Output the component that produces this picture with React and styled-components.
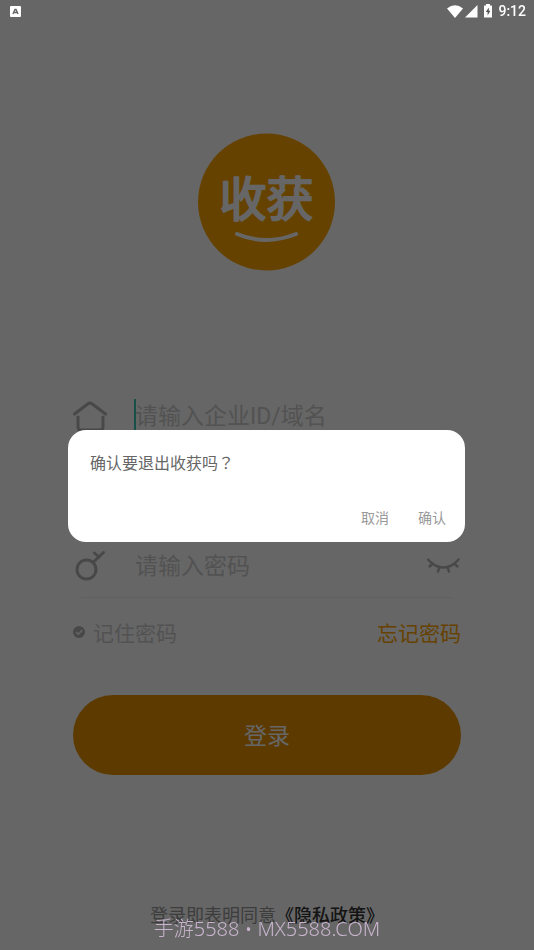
import React, { useState } from 'react'
import styled, { createGlobalStyle, ThemeProvider } from 'styled-components'

const theme = {
  background: '#ffffff',
  brand: '#ffa500',
  button: '#e69100',
  hint: '#cecece',
  icon: '#b4b4b4',
  line: '#f2f2f2',
  caret: '#3cc8b4'
}

const GlobalStyle = createGlobalStyle`
  * {
    box-sizing: border-box;
  }
  body {
    margin: 0;
    background: ${theme.background};
    font-family: Roboto, "Noto Sans CJK SC", sans-serif;
  }
  button, input {
    font-family: inherit;
    border: none;
    background: none;
    padding: 0;
    margin: 0;
  }
`

const Screen = styled.div`
  min-height: 100vh;
  display: flex;
  flex-direction: column;
  background: ${props => props.theme.background};
`

const StatusBar = styled.header`
  position: fixed;
  top: 0;
  left: 0;
  right: 0;
  z-index: 3;
  height: 22px;
  padding: 0 8px 0 10px;
  display: flex;
  align-items: center;
  justify-content: space-between;
  color: #fff;
`

const StatusIcons = styled.div`
  display: flex;
  align-items: center;
  gap: 5px;
  svg {
    display: block;
  }
`

const Signals = styled.div`
  display: flex;
  gap: 2px;
`

const Clock = styled.time`
  font: 500 14px/22px Roboto, sans-serif;
`

const Content = styled.main`
  flex: 1;
  display: flex;
  flex-direction: column;
  padding: 133px 73px 0;
`

const Logo = styled.svg`
  display: block;
  align-self: center;
  width: 138px;
  height: 138px;
  text {
    font-family: "Noto Sans CJK SC", sans-serif;
    font-size: 47px;
    font-weight: 400;
    fill: #fff;
    stroke: #fff;
    stroke-width: 2;
    stroke-linejoin: round;
  }
`

const Form = styled.form`
  display: flex;
  flex-direction: column;
  margin-top: 102px;
`

const Field = styled.div`
  position: relative;
  display: flex;
  align-items: center;
  height: 75px;
  padding-top: 8px;
  > svg {
    flex: none;
  }
  &::after {
    content: '';
    position: absolute;
    left: 8px;
    right: 8px;
    bottom: 0;
    height: 1px;
    background: ${props => props.theme.line};
  }
`

const Input = styled.input`
  flex: 1;
  min-width: 0;
  height: 32px;
  margin-left: 27px;
  padding: 4px 0 0 1px;
  background: linear-gradient(${props => props.theme.caret}, ${props => props.theme.caret}) no-repeat left / ${props => (props.$active ? '2px' : '0')} 100%;
  font-size: 23px;
  line-height: 28px;
  outline: none;
  &::placeholder {
    color: ${props => props.theme.hint};
    opacity: 1;
  }
`

const EyeButton = styled.button`
  display: flex;
  color: ${props => props.theme.icon};
`

const Options = styled.div`
  display: flex;
  justify-content: space-between;
  align-items: center;
  height: 30px;
  margin-top: 19px;
  font-size: 21px;
  line-height: 30px;
  font-family: "Noto Sans CJK SC", sans-serif;
`

const Remember = styled.label`
  display: flex;
  align-items: center;
  gap: 8px;
  color: ${props => props.theme.hint};
`

const Tick = styled.span`
  display: grid;
  width: 12px;
  height: 12px;
  > * {
    grid-area: 1 / 1;
  }
  svg {
    pointer-events: none;
  }
`

const Checkbox = styled.input`
  appearance: none;
  width: 12px;
  height: 12px;
  border-radius: 50%;
  background: ${props => props.theme.icon};
`

const Forgot = styled.a`
  color: ${props => props.theme.brand};
  text-decoration: none;
`

const LoginButton = styled.button`
  height: 80px;
  margin-top: 48px;
  padding-bottom: 2px;
  border-radius: 40px;
  background: ${props => props.theme.button};
  color: #fff;
  font-size: 23px;
  cursor: pointer;
`

const Agreement = styled.p`
  margin: auto 0 21px;
  text-align: center;
  white-space: nowrap;
  font-size: 18px;
  line-height: 26px;
  color: #999;
  a {
    color: #333;
    font-weight: 500;
    text-decoration: none;
  }
`

const Backdrop = styled.div`
  position: fixed;
  inset: 0;
  z-index: 2;
  display: flex;
  align-items: center;
  justify-content: center;
  padding: 22px 69px 0 68px;
  background: rgba(0, 0, 0, 0.6);
`

const Dialog = styled.section`
  width: 100%;
  padding: 22px 19px 12px 22px;
  border-radius: 18px;
  background: #fff;
`

const Message = styled.p`
  margin: 0;
  font-size: 16px;
  line-height: 24px;
  color: #666;
`

/* full-width question mark, centred in its cell */
const Mark = styled.span`
  font-family: "Noto Sans CJK TC", sans-serif;
  line-height: 1;
`

const Actions = styled.div`
  display: flex;
  justify-content: flex-end;
  gap: 29px;
  margin-top: 30px;
`

const TextButton = styled.button`
  font-size: 14px;
  line-height: 24px;
  color: #999;
  cursor: pointer;
`

const Watermark = styled.div`
  position: fixed;
  left: 0;
  right: 0;
  bottom: 7px;
  z-index: 4;
  text-align: center;
  font-family: "Noto Sans", "Noto Sans CJK SC", sans-serif;
  font-size: 20px;
  font-weight: 300;
  line-height: 28px;
  color: #c8b4cd;
`

const HomeIcon = () => (
  <svg width="34" height="34" viewBox="0 0 34 34" fill="none" stroke={theme.icon} strokeWidth="3" strokeLinecap="round" strokeLinejoin="round">
    <path d="M1.500 16 L15 5.800 Q17 4.400 19 5.800 L32.500 16" />
    <path d="M5 19 V29 Q5 32 8 32 H27 Q30 32 30 29 V19" />
  </svg>
)

const UserIcon = () => (
  <svg width="34" height="34" viewBox="0 0 34 34" fill="none" stroke={theme.icon} strokeWidth="3" strokeLinecap="round">
    <circle cx="17" cy="11" r="7" />
    <path d="M4 31 Q6 21 17 21 Q28 21 30 31" />
  </svg>
)

const KeyIcon = () => (
  <svg width="34" height="34" viewBox="0 0 34 34" fill="none" stroke={theme.icon} strokeWidth="3" strokeLinecap="round">
    <circle cx="13.500" cy="21.500" r="9.500" />
    <path d="M20 14.500 L30.500 4.500" />
    <path d="M21.500 5 L26 9" />
  </svg>
)

const ClosedEyeIcon = () => (
  <svg width="34" height="18" viewBox="0 0 34 18" fill="none" stroke="currentColor" strokeWidth="2.400" strokeLinecap="round">
    <path d="M1 3.500 Q8 11.500 16.500 11.500 Q25 11.500 31.500 3.500" />
    <path d="M6 7.500 L2.500 10.500 M12.500 11 L11 15.500 M20.500 11 L22 15.500 M27 7.500 L30.500 10.500" />
  </svg>
)

const App = () => {
  const [open, setOpen] = useState(true)
  const close = () => setOpen(false)

  return (
    <ThemeProvider theme={theme}>
      <GlobalStyle />
      <Screen>
        <StatusBar>
          <svg width="11" height="11" viewBox="0 0 11 11">
            <rect width="11" height="11" rx="1" fill="#fff" />
            <path d="M3 8 L5 3.500 H6 L8 8 M4 6.500 H7" fill="none" stroke="#666" strokeWidth="1.500" />
          </svg>
          <StatusIcons>
            <Signals>
              <svg width="16" height="13" viewBox="0 0 16 13" fill="#fff">
                <path d="M0 3.500 Q8 -3 16 3.500 L8 13 Z" />
              </svg>
              <svg width="13" height="13" viewBox="0 0 13 13" fill="#fff">
                <path d="M12.500 0 V12.500 H0 Z" />
              </svg>
            </Signals>
            <svg width="10" height="14" viewBox="0 0 10 14">
              <path d="M3 0 H7 V1.500 H8.500 Q9 1.500 9 2 V13 Q9 13.500 8.500 13.500 H1.500 Q1 13.500 1 13 V2 Q1 1.500 1.500 1.500 H3 Z" fill="#fff" />
              <path d="M5.800 3.500 L2.800 8 H4.600 V11.500 L7.400 6.800 H5.800 Z" fill="#555" />
            </svg>
            <Clock>9:12</Clock>
          </StatusIcons>
        </StatusBar>

        <Content>
          <Logo viewBox="0 0 138 138" role="img" aria-label="收获">
            <circle cx="68.500" cy="69" r="68.500" fill={theme.brand} />
            <text x="68.500" y="83" textAnchor="middle">收获</text>
            <path d="M39 101 Q68 113 98 101" fill="none" stroke="#fff" strokeWidth="4" strokeLinecap="round" />
          </Logo>

          <Form onSubmit={e => e.preventDefault()}>
            <Field>
              <HomeIcon />
              <Input $active placeholder="请输入企业ID/域名" aria-label="企业ID/域名" />
            </Field>
            <Field>
              <UserIcon />
              <Input aria-label="账号" />
            </Field>
            <Field>
              <KeyIcon />
              <Input type="password" placeholder="请输入密码" aria-label="密码" />
              <EyeButton type="button" aria-label="显示密码">
                <ClosedEyeIcon />
              </EyeButton>
            </Field>
            <Options>
              <Remember>
                <Tick>
                  <Checkbox type="checkbox" defaultChecked />
                  <svg width="12" height="12" viewBox="0 0 12 12" fill="none" stroke="#fff" strokeWidth="1.500">
                    <path d="M3 6 L5.300 8.200 L9.200 4" />
                  </svg>
                </Tick>
                记住密码
              </Remember>
              <Forgot href="#forgot">忘记密码</Forgot>
            </Options>
            <LoginButton type="submit">登录</LoginButton>
          </Form>

          <Agreement>
            登录即表明同意<a href="#privacy">《隐私政策》</a>
          </Agreement>
        </Content>

        {open && (
          <Backdrop>
            <Dialog role="dialog" aria-modal="true" aria-labelledby="exit-message">
              <Message id="exit-message">确认要退出收获吗<Mark>？</Mark></Message>
              <Actions>
                <TextButton type="button" onClick={close}>取消</TextButton>
                <TextButton type="button" onClick={close}>确认</TextButton>
              </Actions>
            </Dialog>
          </Backdrop>
        )}

        <Watermark>手游5588 • MX5588.COM</Watermark>
      </Screen>
    </ThemeProvider>
  )
}

export default App
